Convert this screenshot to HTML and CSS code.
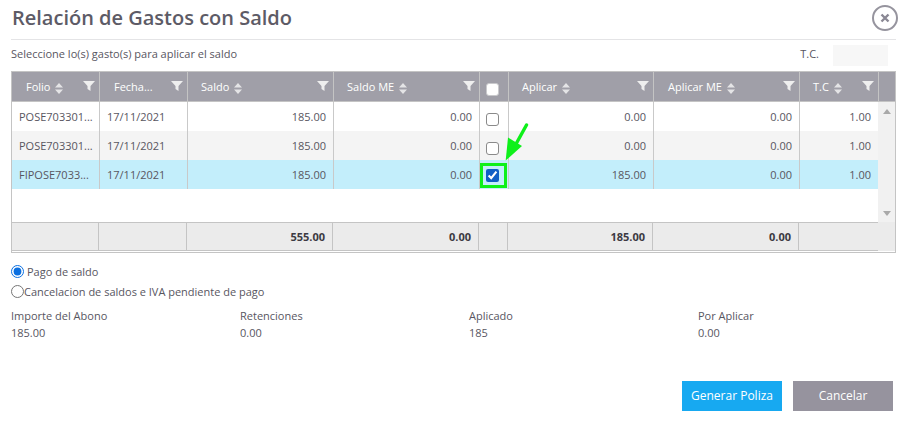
FILE: index.html
```html
<!DOCTYPE html>
<html lang="en">

<head>
    <meta charset="UTF-8">
    <meta name="viewport" content="width=device-width, initial-scale=1.0">
    <title>Relación de Gastos con Saldo</title>
    <link rel="stylesheet" href="styles.css">
</head>

<body>
    <div class="modal">
        <div class="modal-header">
            <h1>Relación de Gastos con Saldo</h1>
            <button class="btn-close" aria-label="Cerrar">
                <svg width="28" height="28" viewBox="0 0 28 28">
                    <circle cx="14" cy="14" r="12" fill="none" stroke="#96949e" stroke-width="2" />
                    <path d="M10.500 10.500l7 7M17.500 10.500l-7 7" stroke="#8a8894" stroke-width="2.400" />
                </svg>
            </button>
        </div>

        <div class="subheader">
            <span class="sub-text">Seleccione lo(s) gasto(s) para aplicar el saldo</span>
            <div class="tc-field">
                <span class="sub-text">T.C.</span>
                <div class="tc-input"></div>
            </div>
        </div>

        <div class="grid">
            <div class="row head">
                <div class="th"><span>Folio</span><svg class="sort" viewBox="0 0 8 11"><path d="M4 0L8 4.500H0zM0 6.500H8L4 11z" /></svg><svg class="filter" viewBox="0 0 12 10"><path d="M0 0H12L7.500 5V10L4.500 8V5z" /></svg></div>
                <div class="th"><span>Fecha...</span><svg class="filter" viewBox="0 0 12 10"><path d="M0 0H12L7.500 5V10L4.500 8V5z" /></svg></div>
                <div class="th th-tight"><span>Saldo</span><svg class="sort" viewBox="0 0 8 11"><path d="M4 0L8 4.500H0zM0 6.500H8L4 11z" /></svg><svg class="filter" viewBox="0 0 12 10"><path d="M0 0H12L7.500 5V10L4.500 8V5z" /></svg></div>
                <div class="th th-tight"><span>Saldo ME</span><svg class="sort" viewBox="0 0 8 11"><path d="M4 0L8 4.500H0zM0 6.500H8L4 11z" /></svg><svg class="filter" viewBox="0 0 12 10"><path d="M0 0H12L7.500 5V10L4.500 8V5z" /></svg></div>
                <div class="th th-check"><input type="checkbox"></div>
                <div class="th th-tight"><span>Aplicar</span><svg class="sort" viewBox="0 0 8 11"><path d="M4 0L8 4.500H0zM0 6.500H8L4 11z" /></svg><svg class="filter" viewBox="0 0 12 10"><path d="M0 0H12L7.500 5V10L4.500 8V5z" /></svg></div>
                <div class="th"><span>Aplicar ME</span><svg class="sort" viewBox="0 0 8 11"><path d="M4 0L8 4.500H0zM0 6.500H8L4 11z" /></svg><svg class="filter" viewBox="0 0 12 10"><path d="M0 0H12L7.500 5V10L4.500 8V5z" /></svg></div>
                <div class="th th-tight"><span>T.C</span><svg class="sort" viewBox="0 0 8 11"><path d="M4 0L8 4.500H0zM0 6.500H8L4 11z" /></svg><svg class="filter" viewBox="0 0 12 10"><path d="M0 0H12L7.500 5V10L4.500 8V5z" /></svg></div>
                <div class="th th-scroll"></div>
            </div>

            <div class="grid-body">
                <div class="rows">
                    <div class="row">
                        <div class="td">POSE703301...</div>
                        <div class="td">17/11/2021</div>
                        <div class="td num">185.00</div>
                        <div class="td num">0.00</div>
                        <div class="td check"><input type="checkbox"></div>
                        <div class="td num">0.00</div>
                        <div class="td num">0.00</div>
                        <div class="td num">1.00</div>
                    </div>
                    <div class="row alt">
                        <div class="td">POSE703301...</div>
                        <div class="td">17/11/2021</div>
                        <div class="td num">185.00</div>
                        <div class="td num">0.00</div>
                        <div class="td check"><input type="checkbox"></div>
                        <div class="td num">0.00</div>
                        <div class="td num">0.00</div>
                        <div class="td num">1.00</div>
                    </div>
                    <div class="row selected">
                        <div class="td">FIPOSE7033...</div>
                        <div class="td">17/11/2021</div>
                        <div class="td num">185.00</div>
                        <div class="td num">0.00</div>
                        <div class="td check"><input type="checkbox" checked><span class="marker"></span></div>
                        <div class="td num">185.00</div>
                        <div class="td num">0.00</div>
                        <div class="td num">1.00</div>
                    </div>
                </div>
                <div class="scrollbar">
                    <svg width="8" height="5" viewBox="0 0 8 5"><path d="M4 0L8 5H0z" /></svg>
                    <svg width="8" height="5" viewBox="0 0 8 5"><path d="M0 0H8L4 5z" /></svg>
                </div>
            </div>

            <div class="row foot">
                <div class="tf"></div>
                <div class="tf"></div>
                <div class="tf">555.00</div>
                <div class="tf">0.00</div>
                <div class="tf"></div>
                <div class="tf">185.00</div>
                <div class="tf">0.00</div>
                <div class="tf"></div>
                <div class="tf-scroll"></div>
            </div>

            <!-- flecha verde sobre la tabla -->
            <svg class="arrow" width="30" height="44" viewBox="0 0 30 44">
                <path d="M24.500 2L14 21" stroke="#0ef01a" stroke-width="3.400" stroke-linecap="round" />
                <path d="M3.700 37.500L6 14.500L20 23z" fill="#0ef01a" />
            </svg>
        </div>

        <div class="radios">
            <label class="radio-first"><input type="radio" name="tipo" checked> Pago de saldo</label>
            <label class="radio-second"><input type="radio" name="tipo">Cancelacion de saldos e IVA pendiente de pago</label>
        </div>

        <div class="totals">
            <div><p>Importe del Abono</p><p>185.00</p></div>
            <div><p>Retenciones</p><p>0.00</p></div>
            <div><p>Aplicado</p><p>185</p></div>
            <div><p>Por Aplicar</p><p>0.00</p></div>
        </div>

        <div class="buttons">
            <button class="btn-primary">Generar Poliza</button>
            <button class="btn-gray">Cancelar</button>
        </div>
    </div>
</body>

</html>
```

FILE: styles.css
```css
* {
    box-sizing: border-box;
}

body {
    margin: 0;
    background: #ffffff;
    font-family: 'Open Sans', sans-serif;
    font-size: 11px;
    color: #58565f;
}

.modal {
    width: 908px;
    height: 426px;
    padding: 0 12px 0 11px;
    overflow: hidden;
}

.modal-header {
    display: flex;
    justify-content: space-between;
    align-items: flex-start;
    height: 40px;
    border-bottom: 1px solid #e4e4e6;
}

h1 {
    margin: 4px 0 0 1px;
    font-size: 20px;
    line-height: 27px;
    font-weight: 600;
    color: #5d5b66;
}

.btn-close {
    display: block;
    width: 28px;
    height: 28px;
    margin: 4px -3px 0 0;
    padding: 0;
    border: none;
    background: none;
}

.subheader {
    display: flex;
    justify-content: space-between;
    align-items: center;
    height: 31px;
}

.sub-text {
    padding-bottom: 5px;
}

.tc-field {
    display: flex;
    align-items: center;
    gap: 14px;
    margin-right: 8px;
}

.tc-input {
    width: 55px;
    height: 21px;
    background: #f7f7f7;
}

.grid {
    position: relative;
    width: 885px;
    height: 182px;
    border: 1px solid #c4c4c4;
}

.row {
    display: grid;
    grid-template-columns: 88px 88px 146px 146px 29px 145px 146px 79px 16px;
}

.rows .row {
    grid-template-columns: 88px 88px 146px 146px 29px 145px 146px 78px;
    height: 29px;
}

.head {
    height: 30px;
    background: #a09fa8;
    color: #ffffff;
    border-bottom: 1px solid #c4c4c4;
}

.th {
    display: flex;
    align-items: center;
    padding: 0 0 0 14px;
    border-right: 1px solid #c4c4c4;
    position: relative;
}

.th .sort {
    width: 8px;
    height: 11px;
    margin: 3px 0 0 5px;
    fill: #e4e4e6;
}

.th .filter {
    position: absolute;
    top: 9px;
    right: 4px;
    width: 12px;
    height: 10px;
    fill: #eeeeee;
}

.th-tight {
    padding-left: 13px;
}

.th-check {
    padding: 0 0 0 6px;
}

.th-scroll {
    border-right: none;
}

input[type="checkbox"] {
    width: 13px;
    height: 13px;
    margin: 2px 0 0;
    accent-color: #0f5fc5;
}

input[type="checkbox"]:not(:checked) {
    appearance: none;
    margin-top: 5px;
    background: #ffffff;
    border: 1.5px solid #8a8a8a;
    border-radius: 3px;
}

.th-check input[type="checkbox"]:not(:checked) {
    border-color: #c9c9cc;
}

.grid-body {
    display: flex;
    height: 120px;
}

.rows {
    flex: 1;
}

.td {
    display: flex;
    align-items: center;
    padding: 0 7px;
    border-right: 1px solid #c9c9c9;
    white-space: nowrap;
    position: relative;
}

.td:last-child {
    border-right: none;
}

.num {
    justify-content: flex-end;
}

.check {
    padding: 0 0 0 6px;
}

.alt {
    background: #f4f4f4;
}

.selected {
    background: #c3eefb;
}

.marker {
    position: absolute;
    left: 0;
    top: 3px;
    width: 27px;
    height: 25px;
    border: 3px solid #0ef01a;
}

.scrollbar {
    display: flex;
    flex-direction: column;
    justify-content: space-between;
    align-items: center;
    width: 17px;
    padding: 7px 0 6px;
    background: #f1f1f1;
}

.scrollbar svg {
    fill: #a9a9a9;
}

.foot {
    grid-template-columns: 87px 88px 146px 146px 29px 145px 146px 79px 17px;
    height: 29px;
    background: #ebebeb;
}

.tf {
    display: flex;
    align-items: center;
    justify-content: flex-end;
    padding-right: 7px;
    border-top: 1px solid #c4c4c4;
    border-bottom: 1px solid #c4c4c4;
    border-right: 1px solid #c4c4c4;
    font-weight: 700;
    color: #3c3a42;
}

.tf:nth-child(8) {
    border-right: none;
}

.radios {
    margin-top: 8px;
}

.radios label {
    display: flex;
    align-items: center;
    height: 20px;
}

.radios input {
    width: 13px;
    height: 13px;
    margin: 0;
    accent-color: #0b6fe0;
}

.radio-first input {
    margin-right: 3px;
}

.totals {
    display: grid;
    grid-template-columns: repeat(4, 229px);
    margin-top: 6px;
}

.totals p {
    margin: 0;
    line-height: 17px;
}

.buttons {
    display: flex;
    justify-content: flex-end;
    gap: 11px;
    margin-top: 40px;
    padding-right: 3px;
}

.buttons button {
    width: 100px;
    height: 30px;
    padding: 0 0 2px;
    border: none;
    font-family: inherit;
    font-size: 12px;
    color: #ffffff;
}

.btn-primary {
    background: #17a9f1;
}

.btn-gray {
    background: #96939e;
}

.arrow {
    position: absolute;
    left: 490px;
    top: 51px;
}
```
